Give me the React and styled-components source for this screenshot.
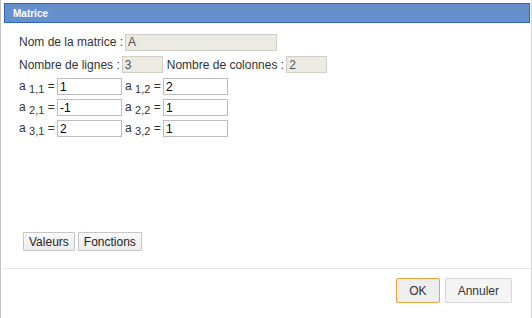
import React from "react";
import styled, { createGlobalStyle } from "styled-components";

const Global = createGlobalStyle`
  html, body { margin: 0; padding: 0; background: #ffffff; }
  body { font-family: "Liberation Sans", Arial, sans-serif; }
  * { box-sizing: border-box; }
`;

const Window = styled.div`
  width: 532px;
  height: 318px;
  display: flex;
  flex-direction: column;
  border-left: 1px solid #c4c4c4;
  border-right: 1px solid #d8d8d8;
  background: #fff;
`;

const TitleBar = styled.div`
  margin: 3px 1px 0 3px;
  height: 20px;
  background: #6690cc;
  border: 1px solid #2e66bf;
  display: flex;
  align-items: center;
  padding-left: 8px;
  color: #fff;
  font-weight: bold;
  font-size: 10px;
`;

const Body = styled.div`
  height: 245px;
  display: flex;
  flex-direction: column;
  justify-content: space-between;
  padding: 8px 0 17px 18px;
  font-size: 12px;
  color: #333;
`;

const Form = styled.div`
  display: flex;
  flex-direction: column;
`;

const Row = styled.div`
  display: flex;
  align-items: center;
  height: ${(p) => p.$h || 21}px;
`;

const Label = styled.span`
  margin-right: 2px;
  white-space: nowrap;
`;

const Field = styled.input`
  height: 17px;
  width: ${(p) => p.$w}px;
  margin-right: ${(p) => p.$mr || 0}px;
  border: 1px solid ${(p) => (p.disabled ? "#cfcfc7" : "#bdbdbd")};
  background: ${(p) => (p.disabled ? "#ebebe4" : "#fff")};
  font: inherit;
  font-size: 12px;
  color: ${(p) => (p.disabled ? "#555" : "#000")};
  padding: 0 2px;
  outline: none;
`;

const Cell = styled.span`
  display: inline-flex;
  align-items: center;
  margin-right: 3px;
`;

const CellLabel = styled.span`
  width: 38px;
  white-space: nowrap;
`;

const Sub = styled.sub`
  font-size: 11px;
  vertical-align: -3px;
`;

const ToolRow = styled.div`
  display: flex;
  gap: 3px;
  padding-left: 4px;
`;

const ToolButton = styled.button`
  height: 19px;
  padding: 0 5px;
  font: inherit;
  font-size: 12px;
  color: #222;
  background: linear-gradient(#fafafa, #ececec);
  border: 1px solid #c6c6c6;
  border-radius: 1px;
`;

const Separator = styled.div`
  height: 1px;
  background: #e3e3e3;
  margin: 0 1px 0 3px;
`;

const Footer = styled.div`
  display: flex;
  justify-content: flex-end;
  gap: 5px;
  padding: 9px 19px 0 0;
`;

const FooterButton = styled.button`
  height: 25px;
  padding: 0 12px;
  font-family: "Liberation Sans", Arial, sans-serif;
  font-size: 12px;
  color: #333;
  background: ${(p) => (p.$primary ? "#eeeeee" : "#f5f5f5")};
  border: 1px solid ${(p) => (p.$primary ? "#e9a53c" : "#d6d6d6")};
  border-radius: 2px;
`;

const cells = [
  [["1,1", "1"], ["1,2", "2"]],
  [["2,1", "-1"], ["2,2", "1"]],
  [["3,1", "2"], ["3,2", "1"]],
];

export default function App() {
  return (
    <>
      <Global />
      <Window>
        <TitleBar>Matrice</TitleBar>
        <Body>
          <Form>
            <Row $h={22}>
              <Label>Nom de la matrice :</Label>
              <Field disabled $w={152} defaultValue="A" />
            </Row>
            <Row $h={23}>
              <Label>Nombre de lignes :</Label>
              <Field disabled $w={41} $mr={4} defaultValue="3" />
              <Label>Nombre de colonnes :</Label>
              <Field disabled $w={41} defaultValue="2" />
            </Row>
            {cells.map((row, i) => (
              <Row key={i}>
                {row.map(([idx, val]) => (
                  <Cell key={idx}>
                    <CellLabel>
                      a <Sub>{idx}</Sub> =
                    </CellLabel>
                    <Field $w={65} defaultValue={val} />
                  </Cell>
                ))}
              </Row>
            ))}
          </Form>
          <ToolRow>
            <ToolButton>Valeurs</ToolButton>
            <ToolButton>Fonctions</ToolButton>
          </ToolRow>
        </Body>
        <Separator />
        <Footer>
          <FooterButton $primary>OK</FooterButton>
          <FooterButton>Annuler</FooterButton>
        </Footer>
      </Window>
    </>
  );
}
